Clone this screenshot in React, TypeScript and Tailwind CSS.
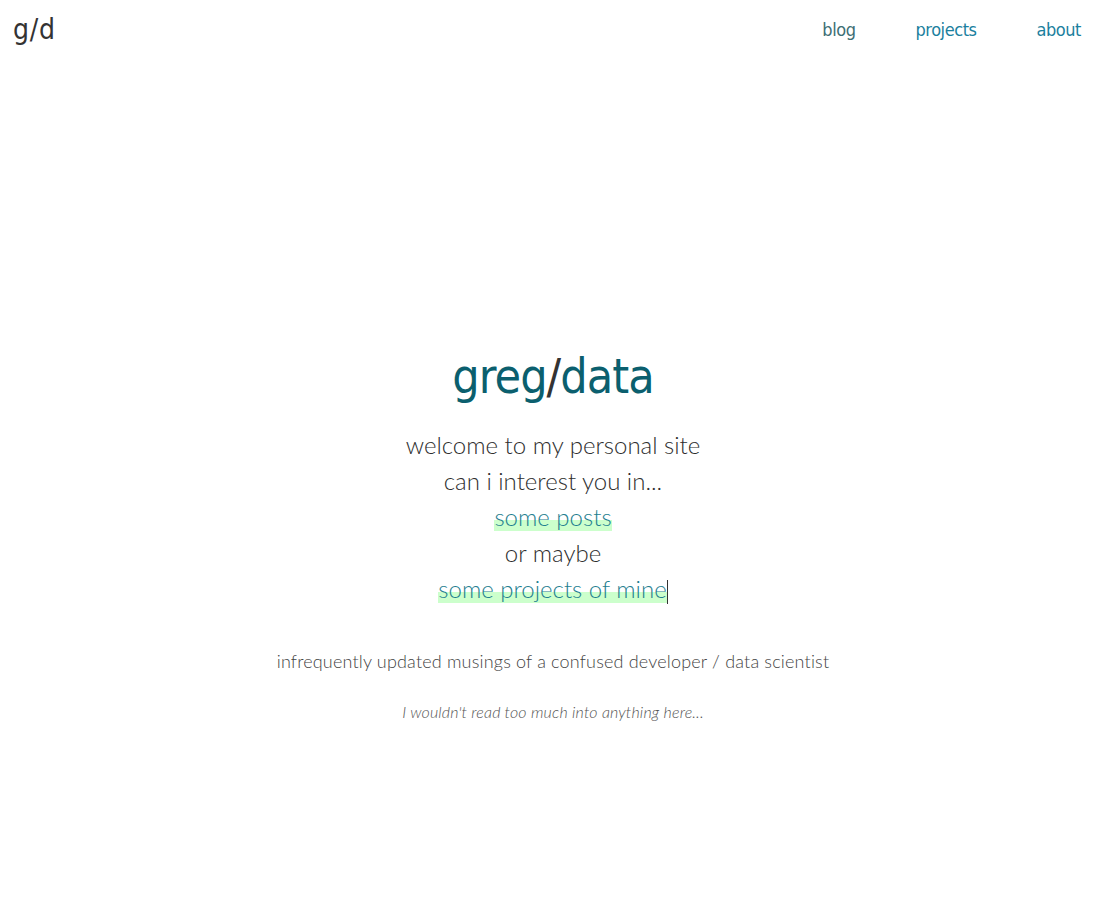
export default function App() {
  const head = { fontFamily: '"DejaVu Sans Condensed", "DejaVu Sans", sans-serif' }
  const body = { fontFamily: 'Lato, "Open Sans", sans-serif' }

  return (
    <div className="min-h-screen bg-white text-[#333]">
      <header className="flex items-center justify-between h-[59px] pl-[13px] pr-[25px]" style={head}>
        <a href="#" className="text-[28px] text-[#333] tracking-wide">g/d</a>
        <nav className="flex gap-[60px] text-[18px] tracking-tight">
          <a href="#" className="text-[#3d6e74]">blog</a>
          <a href="#" className="text-[#1b7f9e]">projects</a>
          <a href="#" className="text-[#1b7f9e]">about</a>
        </nav>
      </header>

      <main className="flex flex-col items-center text-center pt-[293px]">
        <h1 className="text-[48px] leading-none tracking-[-0.02em] text-[#0b5f6e]" style={head}>
          greg<span className="text-[#333]">/</span>data
        </h1>

        <div className="mt-[27px] text-[24px] font-light leading-[36px] text-[#2e2e2e]" style={body}>
          <p>welcome to my personal site</p>
          <p>can i interest you in...</p>
          <p>
            <a href="#" className="text-[#1f8090] bg-[linear-gradient(transparent_62%,#ccffcc_62%)]">some posts</a>
          </p>
          <p>or maybe</p>
          <p>
            <a href="#" className="text-[#1f8090] bg-[linear-gradient(transparent_62%,#ccffcc_62%)]">some projects of mine</a>
            <span className="inline-block w-px h-[24px] bg-[#333] align-middle" />
          </p>
        </div>

        <p className="mt-[41px] text-[18px] tracking-[0.01em] font-light text-[#444]" style={body}>
          infrequently updated musings of a confused developer / data scientist
        </p>
        <p className="mt-[25px] text-[16px] tracking-[0.01em] font-light italic text-[#555]" style={body}>
          I wouldn't read too much into anything here...
        </p>
      </main>
    </div>
  )
}
